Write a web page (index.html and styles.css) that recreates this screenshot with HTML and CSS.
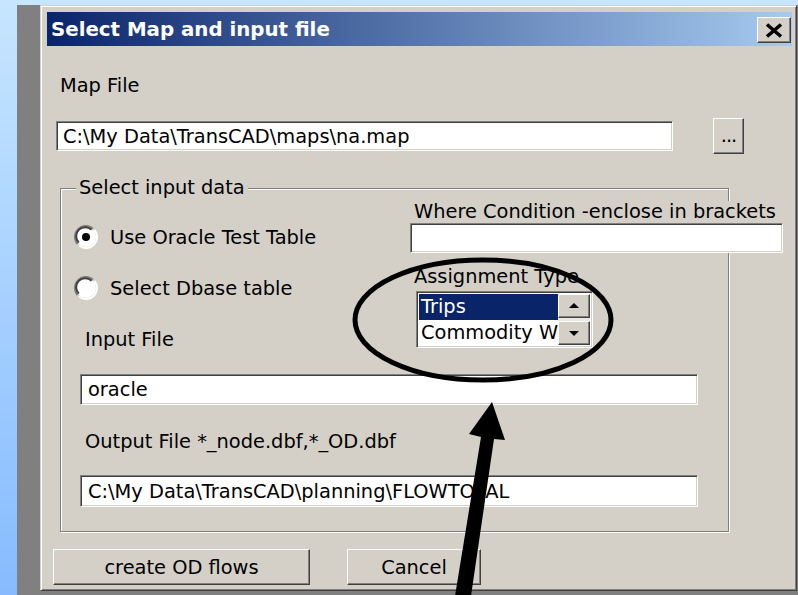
FILE: index.html
```html
<!DOCTYPE html>
<html lang="en">
<head>
<meta charset="utf-8">
<title>Select Map and input file</title>
<link rel="stylesheet" href="styles.css">
</head>
<body>
<div class="screen">
  <div class="backdrop">
    <div class="window">
      <div class="titlebar">
        <span class="title">Select Map and input file</span>
        <button class="btn close" type="button" aria-label="Close">
          <svg width="18" height="15" viewBox="0 0 18 15"><path d="M2 1.5 L16 13.5 M16 1.5 L2 13.5" stroke="#000" stroke-width="3.6" fill="none"/></svg>
        </button>
      </div>
      <div class="client">
        <div class="label map-label">Map File</div>
        <div class="map-row">
          <div class="edit map-edit">C:\My Data\TransCAD\maps\na.map</div>
          <button class="btn browse" type="button">...</button>
        </div>

        <div class="group">
          <div class="group-title">Select input data</div>
          <div class="group-top">
            <div class="col-left">
              <div class="radio radio-first">
                <svg class="radio-dot" width="24" height="24" viewBox="0 0 24 24">
                  <circle cx="12" cy="12" r="10" fill="#fff"/>
                  <path d="M3.5 19 A11 11 0 0 1 19 3.5" stroke="#808080" stroke-width="2" fill="none"/>
                  <path d="M4.8 17.6 A9 9 0 0 1 17.6 4.8" stroke="#404040" stroke-width="2" fill="none"/>
                  <path d="M20.5 5 A11 11 0 0 1 5 20.5" stroke="#fff" stroke-width="2" fill="none"/>
                  <circle cx="12" cy="12" r="4" fill="#000"/>
                </svg>
                <span>Use Oracle Test Table</span>
              </div>
              <div class="radio radio-second">
                <svg class="radio-dot" width="24" height="24" viewBox="0 0 24 24">
                  <circle cx="12" cy="12" r="10" fill="#fff"/>
                  <path d="M3.5 19 A11 11 0 0 1 19 3.5" stroke="#808080" stroke-width="2" fill="none"/>
                  <path d="M4.8 17.6 A9 9 0 0 1 17.6 4.8" stroke="#404040" stroke-width="2" fill="none"/>
                  <path d="M20.5 5 A11 11 0 0 1 5 20.5" stroke="#fff" stroke-width="2" fill="none"/>
                </svg>
                <span>Select Dbase table</span>
              </div>
              <div class="label input-label">Input File</div>
            </div>
            <div class="col-right">
              <div class="label where-label">Where Condition -enclose in brackets</div>
              <div class="edit where-edit"></div>
              <div class="label assign-label">Assignment Type</div>
              <div class="listbox">
                <div class="list-items">
                  <div class="item selected">Trips</div>
                  <div class="item">Commodity Weight</div>
                </div>
                <div class="scrollbar">
                  <div class="btn scroll-btn">
                    <svg width="10" height="6" viewBox="0 0 10 6"><path d="M5 0 L10 5 L0 5 Z" fill="#000"/></svg>
                  </div>
                  <div class="scroll-track"></div>
                  <div class="btn scroll-btn">
                    <svg width="10" height="6" viewBox="0 0 10 6"><path d="M0 1 L10 1 L5 6 Z" fill="#000"/></svg>
                  </div>
                </div>
              </div>
            </div>
          </div>
          <div class="edit wide-edit oracle-edit">oracle</div>
          <div class="label output-label">Output File *_node.dbf,*_OD.dbf</div>
          <div class="edit wide-edit output-edit">C:\My Data\TransCAD\planning\FLOWTOTAL</div>
        </div>

        <div class="buttons">
          <button class="btn push create" type="button">create OD flows</button>
          <button class="btn push cancel" type="button">Cancel</button>
        </div>
      </div>
    </div>
  </div>

  <!-- hand-drawn markup on top of the dialog: circle round the list and a pointer arrow -->
  <svg class="markup" width="798" height="595" viewBox="0 0 798 595">
    <ellipse cx="483" cy="320" rx="128" ry="60" fill="none" stroke="#000" stroke-width="5"/>
    <polygon points="492,402 505,440 494,439 471,596 455,596 481,437 469,434" fill="#000"/>
  </svg>
</div>
</body>
</html>
```

FILE: styles.css
```css
* {
  box-sizing: border-box;
}

body {
  margin: 0;
  width: 798px;
  height: 595px;
  overflow: hidden;
  background: linear-gradient(#c6e6ff, #86bbff);
  font-family: "DejaVu Sans", Verdana, sans-serif;
  font-size: 19.4px;
  color: #000;
}

.screen {
  position: relative;
  height: 595px;
  padding-top: 5px;
}

.backdrop {
  margin-left: 17px;
  height: 590px;
  background: #808080;
}

/* dialog frame */
.window {
  margin-left: 23px;
  width: 757px;
  height: 586px;
  background: #d4d0c8;
  border: 1px solid;
  border-color: #d4d0c8 #404040 #404040 #d4d0c8;
  box-shadow: inset 1px 1px #fff, inset -1px -1px #808080;
  padding: 6px 4px 0 6px;
}

.titlebar {
  height: 34px;
  display: flex;
  align-items: center;
  padding-left: 4px;
  background: linear-gradient(90deg, #0a246a, #a6caf0);
  color: #fff;
  font-weight: bold;
  font-size: 19.8px;
}

.title {
  margin-top: 1px;
}

/* raised 3D button look */
.btn {
  font: inherit;
  color: #000;
  background: #d4d0c8;
  border: 1px solid;
  border-color: #fff #404040 #404040 #fff;
  box-shadow: inset -1px -1px #808080;
  padding: 0;
  margin: 0;
}

.close {
  margin-left: auto;
  margin-right: 1px;
  margin-top: 2px;
  width: 34px;
  height: 26px;
  display: flex;
  align-items: center;
  justify-content: center;
}

.close svg {
  display: block;
  margin-left: -1px;
}

/* sunken edit field */
.edit {
  background: #fff;
  border: 1px solid;
  border-color: #808080 #fff #fff #808080;
  box-shadow: inset 1px 1px #404040, inset -1px -1px #d4d0c8;
  padding-left: 6px;
  display: flex;
  align-items: center;
  white-space: nowrap;
  overflow: hidden;
}

.label {
  line-height: 24px;
  white-space: nowrap;
}

.map-label {
  margin-top: 28px;
  margin-left: 13px;
}

.map-row {
  margin-top: 20px;
  display: flex;
  align-items: center;
  height: 36px;
}

.map-edit {
  margin-left: 9px;
  width: 617px;
  height: 30px;
}

.browse {
  margin-left: 40px;
  width: 31px;
  height: 36px;
  line-height: 30px;
  letter-spacing: -1px;
  text-align: center;
}

/* etched group box */
.group {
  margin-top: 34px;
  margin-left: 13px;
  width: 669px;
  border: 1px solid #808080;
  box-shadow: 1px 1px #fff, inset 1px 1px #fff;
  padding: 0 0 24px 13px;
}

.group-title {
  display: table;
  margin: -13px 0 0 2px;
  padding: 0 3px;
  line-height: 24px;
  background: #d4d0c8;
}

.group-top {
  display: flex;
}

.col-left {
  flex: none;
  width: 336px;
}

.col-right {
  flex: none;
  width: 373px;
}

.radio {
  display: flex;
  align-items: center;
  gap: 12px;
  height: 24px;
}

.radio-dot {
  display: block;
  flex: none;
}

.radio-first {
  margin-top: 25px;
}

.radio-second {
  margin-top: 27px;
}

.input-label {
  margin-top: 28px;
  margin-left: 11px;
}

.where-label {
  margin-top: 1px;
  padding-left: 4px;
  line-height: 22px;
  background: #d4d0c8;
}

.where-edit {
  width: 373px;
  height: 30px;
}

.assign-label {
  display: table;
  margin-top: 13px;
  padding-left: 4px;
  line-height: 22px;
}

/* list box with its scroll arrows */
.listbox {
  margin-top: 3px;
  margin-left: 6px;
  width: 177px;
  height: 57px;
  display: flex;
  background: #fff;
  border: 1px solid;
  border-color: #808080 #fff #fff #808080;
  box-shadow: inset 1px 1px #404040, inset -1px -1px #d4d0c8;
  padding: 2px;
}

.list-items {
  flex: 1;
  min-width: 0;
  overflow: hidden;
}

.item {
  height: 26px;
  line-height: 26px;
  padding-left: 2px;
  white-space: nowrap;
}

.item.selected {
  background: #0a246a;
  color: #fff;
}

.scrollbar {
  flex: none;
  width: 32px;
  display: flex;
  flex-direction: column;
}

.scroll-btn {
  height: 25px;
  display: flex;
  align-items: center;
  justify-content: center;
}

.scroll-btn svg {
  display: block;
}

.scroll-track {
  height: 3px;
  background: #eae8e3;
}

.wide-edit {
  margin-left: 6px;
  width: 618px;
  padding-left: 7px;
}

.oracle-edit {
  margin-top: 22px;
  height: 31px;
}

.output-label {
  margin-top: 25px;
  margin-left: 11px;
}

.output-edit {
  margin-top: 21px;
  height: 32px;
}

.buttons {
  margin-top: 17px;
  display: flex;
  gap: 37px;
  padding-left: 6px;
}

.push {
  height: 36px;
  text-align: center;
}

.create {
  width: 257px;
}

.cancel {
  width: 134px;
}

.markup {
  position: absolute;
  left: 0;
  top: 0;
  pointer-events: none;
}
```
